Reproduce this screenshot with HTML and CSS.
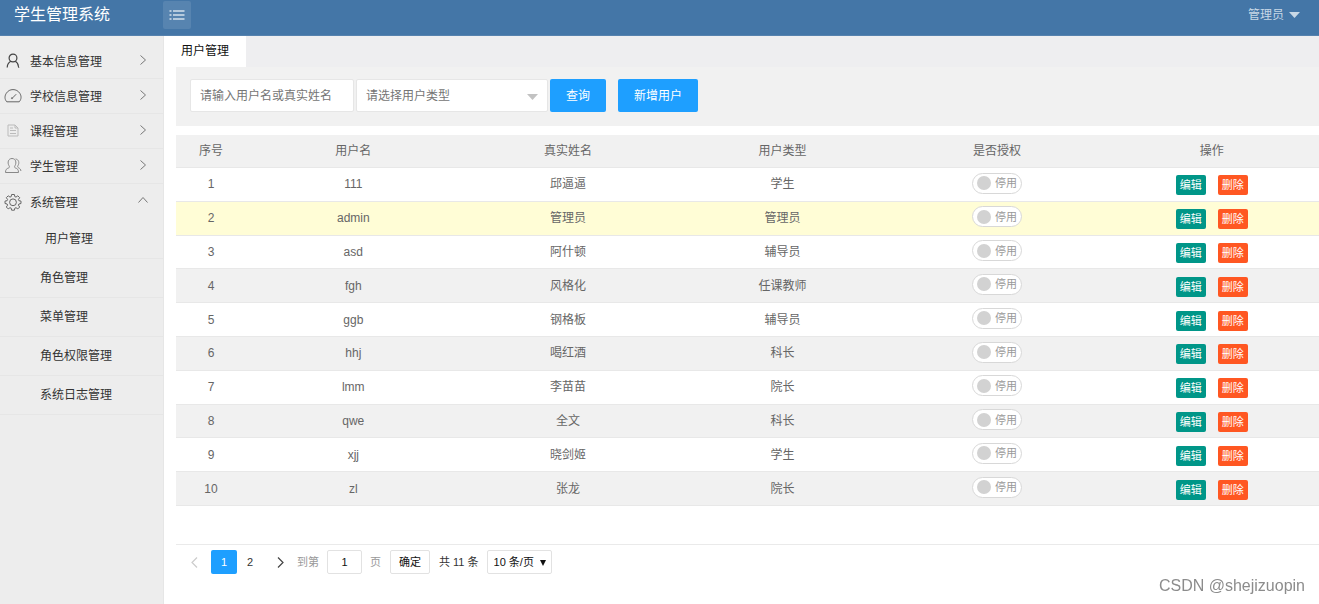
FILE: index.html
```
<!DOCTYPE html>
<html lang="zh-CN">
<head>
<meta charset="utf-8">
<title>学生管理系统</title>
<link rel="stylesheet" href="styles.css">
</head>
<body>
<header class="topbar">
  <h1 class="brand">学生管理系统</h1>
  <button class="toggle" type="button" aria-label="折叠菜单">
    <svg width="16" height="12" viewBox="0 0 16 12" fill="none" stroke="currentColor" stroke-width="1.400"><path d="M4 2h11.500M4 6h11.500M4 10h11.500M.5 2h2M.5 6h2M.5 10h2"/></svg>
  </button>
  <button class="account" type="button">管理员
    <svg width="11" height="6" viewBox="0 0 11 6" fill="currentColor"><path d="M0 0h11L5.500 6z"/></svg>
  </button>
</header>
<div class="shell">
  <nav class="sidebar">
    <ul class="menu">
      <li><a class="item" href="#">
        <svg class="icon dark" viewBox="0 0 18 18"><circle cx="9" cy="6" r="3.900"/><path d="M6.800 9.300C4.500 10.500 3.300 12.500 3.200 15.500M11.200 9.300c2.300 1.200 3 3.200 3.100 4.700 0 1 .3 1.500.9 1.500"/></svg>
        <span>基本信息管理</span>
        <svg class="arrow" viewBox="0 0 10 10"><path d="M2.500.5 7.500 5l-5 4.500"/></svg></a></li>
      <li><a class="item" href="#">
        <svg class="icon" viewBox="0 0 18 18"><path d="M2.800 14.800C.2 12 .8 8.500 2.300 6.300 3.900 3.800 6.200 2.600 9 2.600s5.200 1.200 6.800 3.700c1.500 2.200 2 5.700-.6 8.500zM8.600 10.900l3.600-3.700"/><circle cx="8" cy="11.200" r=".6"/></svg>
        <span>学校信息管理</span>
        <svg class="arrow" viewBox="0 0 10 10"><path d="M2.500.5 7.500 5l-5 4.500"/></svg></a></li>
      <li><a class="item" href="#">
        <svg class="icon pale" viewBox="0 0 18 18"><path d="M4 3h7l3 3v8H4zM11 3v3h3M6 6h3M6 8.500h6M6 11.500h6"/></svg>
        <span>课程管理</span>
        <svg class="arrow" viewBox="0 0 10 10"><path d="M2.500.5 7.500 5l-5 4.500"/></svg></a></li>
      <li><a class="item" href="#">
        <svg class="icon soft" viewBox="0 0 18 18"><path d="M1.500 15.500c0-3 1-3.800 3.200-4.600 1-.5.900-1.300.2-2.400C3.200 5.500 4.300 1.500 8 1.500s4.800 4 3.100 7c-.7 1.100-.8 1.900.2 2.400 2.200.8 3.200 1.600 3.200 4.600zM11.500 2c3.500.4 4 4 2.500 6.500-.5 1-.5 1.600.4 2.200 1.700.9 2.300 1.500 2.500 3.300"/></svg>
        <span>学生管理</span>
        <svg class="arrow" viewBox="0 0 10 10"><path d="M2.500.5 7.500 5l-5 4.500"/></svg></a></li>
      <li><a class="item open" href="#">
        <svg class="icon" viewBox="0 0 18 18"><path d="M7.600 1.500h2.800l.4 2.100 1.200.5 1.800-1.300 1.900 1.900-1.300 1.800.5 1.200 2.100.4v2.400l-2.100.5-.5 1.200 1.300 1.800-1.900 1.900-1.800-1.200-1.200.5-.4 2H7.600l-.4-2-1.200-.5-1.800 1.200L2.300 14l1.300-1.800-.5-1.200L1 10.500V8.100l2.100-.4.5-1.200-1.300-1.800 1.900-1.900L6 4.100l1.200-.5z"/><circle cx="9" cy="9.300" r="3.400"/></svg>
        <span>系统管理</span>
        <svg class="arrow" viewBox="0 0 10 10"><path d="M.5 7.500 5 2.500l4.500 5"/></svg></a>
        <ul class="submenu">
          <li><a class="current" href="#">用户管理</a></li>
          <li><a href="#">角色管理</a></li>
          <li><a href="#">菜单管理</a></li>
          <li><a href="#">角色权限管理</a></li>
          <li><a href="#">系统日志管理</a></li>
        </ul></li>
    </ul>
  </nav>
  <main class="main">
    <div class="tabs"><a class="tab" href="#">用户管理</a></div>
    <div class="content">
      <form class="search">
        <input class="field keyword" type="text" aria-label="用户名或真实姓名" placeholder="请输入用户名或真实姓名">
        <span class="picker">
          <select class="field" aria-label="用户类型"><option>请选择用户类型</option><option>学生</option><option>管理员</option><option>辅导员</option></select>
          <svg class="caret" width="11" height="6" viewBox="0 0 11 6"><path d="M0 0h11L5.500 6z"/></svg>
        </span>
        <button class="btn" type="button">查询</button>
        <button class="btn add" type="button">新增用户</button>
      </form>
      <table class="grid">
        <thead><tr><th class="num">序号</th><th>用户名</th><th>真实姓名</th><th>用户类型</th><th>是否授权</th><th>操作</th></tr></thead>
        <tbody>
          <tr><td>1</td><td>111</td><td>邱逼逼</td><td>学生</td><td class="auth"><label class="switch"><input type="checkbox">停用</label></td><td><span class="ops"><button class="op edit" type="button">编辑</button><button class="op del" type="button">删除</button></span></td></tr>
          <tr class="hover"><td>2</td><td>admin</td><td>管理员</td><td>管理员</td><td class="auth"><label class="switch"><input type="checkbox">停用</label></td><td><span class="ops"><button class="op edit" type="button">编辑</button><button class="op del" type="button">删除</button></span></td></tr>
          <tr><td>3</td><td>asd</td><td>阿什顿</td><td>辅导员</td><td class="auth"><label class="switch"><input type="checkbox">停用</label></td><td><span class="ops"><button class="op edit" type="button">编辑</button><button class="op del" type="button">删除</button></span></td></tr>
          <tr><td>4</td><td>fgh</td><td>风格化</td><td>任课教师</td><td class="auth"><label class="switch"><input type="checkbox">停用</label></td><td><span class="ops"><button class="op edit" type="button">编辑</button><button class="op del" type="button">删除</button></span></td></tr>
          <tr><td>5</td><td>ggb</td><td>钢格板</td><td>辅导员</td><td class="auth"><label class="switch"><input type="checkbox">停用</label></td><td><span class="ops"><button class="op edit" type="button">编辑</button><button class="op del" type="button">删除</button></span></td></tr>
          <tr><td>6</td><td>hhj</td><td>喝红酒</td><td>科长</td><td class="auth"><label class="switch"><input type="checkbox">停用</label></td><td><span class="ops"><button class="op edit" type="button">编辑</button><button class="op del" type="button">删除</button></span></td></tr>
          <tr><td>7</td><td>lmm</td><td>李苗苗</td><td>院长</td><td class="auth"><label class="switch"><input type="checkbox">停用</label></td><td><span class="ops"><button class="op edit" type="button">编辑</button><button class="op del" type="button">删除</button></span></td></tr>
          <tr><td>8</td><td>qwe</td><td>全文</td><td>科长</td><td class="auth"><label class="switch"><input type="checkbox">停用</label></td><td><span class="ops"><button class="op edit" type="button">编辑</button><button class="op del" type="button">删除</button></span></td></tr>
          <tr><td>9</td><td>xjj</td><td>晓剑姬</td><td>学生</td><td class="auth"><label class="switch"><input type="checkbox">停用</label></td><td><span class="ops"><button class="op edit" type="button">编辑</button><button class="op del" type="button">删除</button></span></td></tr>
          <tr><td>10</td><td>zl</td><td>张龙</td><td>院长</td><td class="auth"><label class="switch"><input type="checkbox">停用</label></td><td><span class="ops"><button class="op edit" type="button">编辑</button><button class="op del" type="button">删除</button></span></td></tr>
        </tbody>
      </table>
      <div class="pager">
        <button class="step prev" type="button" aria-label="上一页" disabled><svg width="7" height="11" viewBox="0 0 7 11"><path d="M6 .5 1 5.500l5 5"/></svg></button>
        <button class="page on" type="button">1</button>
        <button class="page" type="button">2</button>
        <button class="step next" type="button" aria-label="下一页"><svg width="7" height="11" viewBox="0 0 7 11"><path d="m1 .5 5 5-5 5"/></svg></button>
        <label class="jump">到第 <input class="box" type="text" value="1"> 页</label>
        <button class="box confirm" type="button">确定</button>
        <span class="total">共 11 条</span>
        <span class="picker size">
          <select class="box" aria-label="每页条数"><option>10 条/页</option><option>20 条/页</option></select>
          <svg class="caret" width="6" height="6" viewBox="0 0 6 6"><path d="M0 0h6L3 6z"/></svg>
        </span>
      </div>
    </div>
  </main>
</div>
<div class="watermark">CSDN @shejizuopin</div>
</body>
</html>
```
FILE: styles.css
```
* { box-sizing: border-box; }
body {
  margin: 0;
  min-height: 100vh;
  display: flex;
  flex-direction: column;
  background: #fff;
  color: #333;
  font: 12px/20px "Liberation Sans", "Noto Sans CJK SC", sans-serif;
}
button, input, select { font: inherit; color: inherit; margin: 0; }
button { border: 0; padding: 0; background: none; white-space: nowrap; }
a { color: inherit; text-decoration: none; }
ul { list-style: none; margin: 0; padding: 0; }
svg { flex: none; }

.topbar {
  display: flex;
  align-items: flex-start;
  height: 36px;
  padding-top: 1px;
  background: #4476a7;
  border-bottom: 1px solid #5682ae;
  color: #fff;
}
.brand { width: 163px; margin: 0; padding-left: 14px; font-size: 16px; line-height: 28px; font-weight: 400; }
.toggle {
  display: flex;
  align-items: center;
  justify-content: center;
  width: 28px;
  height: 28px;
  border-radius: 2px;
  background: #5784b0;
  color: #d5e1ec;
}
.account { display: flex; align-items: center; gap: 5px; height: 28px; margin-left: auto; margin-right: 19px; color: #c8d8e6; }

.shell { flex: 1; display: flex; }
.sidebar { flex: none; width: 164px; padding-top: 8px; background: #ededed; border-right: 1px solid #e6e6e6; }
.item { display: flex; align-items: center; height: 35px; padding: 0 15px 0 4px; border-bottom: 1px solid #e6e6e6; }
.item.open { height: 36px; border-bottom-color: transparent; }
.item span { flex: 1; padding: 2px 0 0 8px; }
.icon { width: 18px; height: 18px; fill: none; stroke: #666; }
.icon.dark { stroke: #444; stroke-width: 1.2; }
.icon.pale { stroke: #bbb; }
.icon.soft { stroke: #888; }
.arrow { width: 10px; height: 10px; margin-bottom: 3px; fill: none; stroke: #777; }
.submenu a { display: block; height: 39px; padding-left: 40px; line-height: 39px; border-bottom: 1px solid #e6e6e6; }
.submenu .current { padding-left: 45px; }

.main { flex: 1; min-width: 0; }
.tabs { display: flex; height: 31px; background: #eeeef0; }
.tab { padding: 0 17px; background: #fff; color: #111; line-height: 31px; }
.content { padding-left: 12px; }
.search { display: flex; align-items: center; height: 59px; padding: 0 0 2px 14px; background: #f1f1f1; }
.field { height: 33px; padding: 0 9px; border: 1px solid #e6e6e6; border-radius: 2px; background: #fff; color: #757575; outline: 0; }
.field::placeholder { color: #757575; }
.keyword { width: 164px; margin-right: 2px; }
.picker { position: relative; display: flex; }
.picker select { appearance: none; width: 100%; }
.search .picker { width: 192px; margin-right: 2px; }
.caret { position: absolute; right: 10px; top: 50%; margin-top: -2px; fill: #c2c2c2; pointer-events: none; }
.btn { height: 33px; padding: 0 16px; border-radius: 2px; background: #1e9fff; color: #fff; }
.add { margin-left: 12px; }

.grid { width: 100%; height: 371px; margin-top: 9px; border-collapse: separate; border-spacing: 0; table-layout: fixed; color: #666; text-align: center; }
.grid th, .grid td { padding: 0; border-bottom: 1px solid #e8e8e8; }
.grid th { height: 33px; font-weight: 400; background: #f1f1f1; }
.grid .num { width: 70px; }
.grid tbody tr:nth-child(even) { background: #f1f1f1; }
.grid tbody .hover:nth-child(even) { background: #fffdd6; }
.grid .auth { padding-bottom: 3px; }
.switch {
  display: inline-flex;
  align-items: center;
  gap: 4px;
  height: 21px;
  padding: 0 4px;
  border: 1px solid #d8d8d8;
  border-radius: 11px;
  background: #fff;
  color: #999;
  font-size: 11px;
  vertical-align: middle;
}
.switch input { appearance: none; width: 14px; height: 14px; border-radius: 50%; background: #d2d2d2; }
.ops { display: flex; justify-content: center; gap: 12px; padding-top: 2px; }
.op { width: 30px; height: 20px; border-radius: 2px; color: #fff; font-size: 11px; }
.edit { background: #009688; }
.del { background: #ff5722; }

.pager { display: flex; align-items: center; margin-top: 38px; padding: 5px 0 0 12px; border-top: 1px solid #eaeaea; font-size: 11px; }
.step { display: flex; align-items: center; justify-content: center; width: 12px; height: 24px; }
.step svg { fill: none; stroke: #444; stroke-width: 1.2; }
.prev { margin-right: 11px; }
.prev svg { stroke: #ccc; }
.next { margin: 0 11px; }
.page { width: 26px; height: 24px; border-radius: 2px; }
.page.on { background: #1e9fff; color: #fff; }
.jump { display: flex; align-items: center; gap: 8px; color: #999; }
.box { height: 24px; padding: 0; border: 1px solid #e2e2e2; border-radius: 2px; background: #fff; color: #111; }
.jump .box { width: 35px; text-align: center; }
.confirm { width: 40px; margin: 0 9px; }
.total { margin-right: 8px; }
.size { width: 65px; }
.size .box { padding-left: 6px; }
.size .caret { right: 6px; fill: #111; }

.watermark { position: fixed; right: 14px; bottom: 8px; color: #8c8c8c; font-size: 16px; }
```
